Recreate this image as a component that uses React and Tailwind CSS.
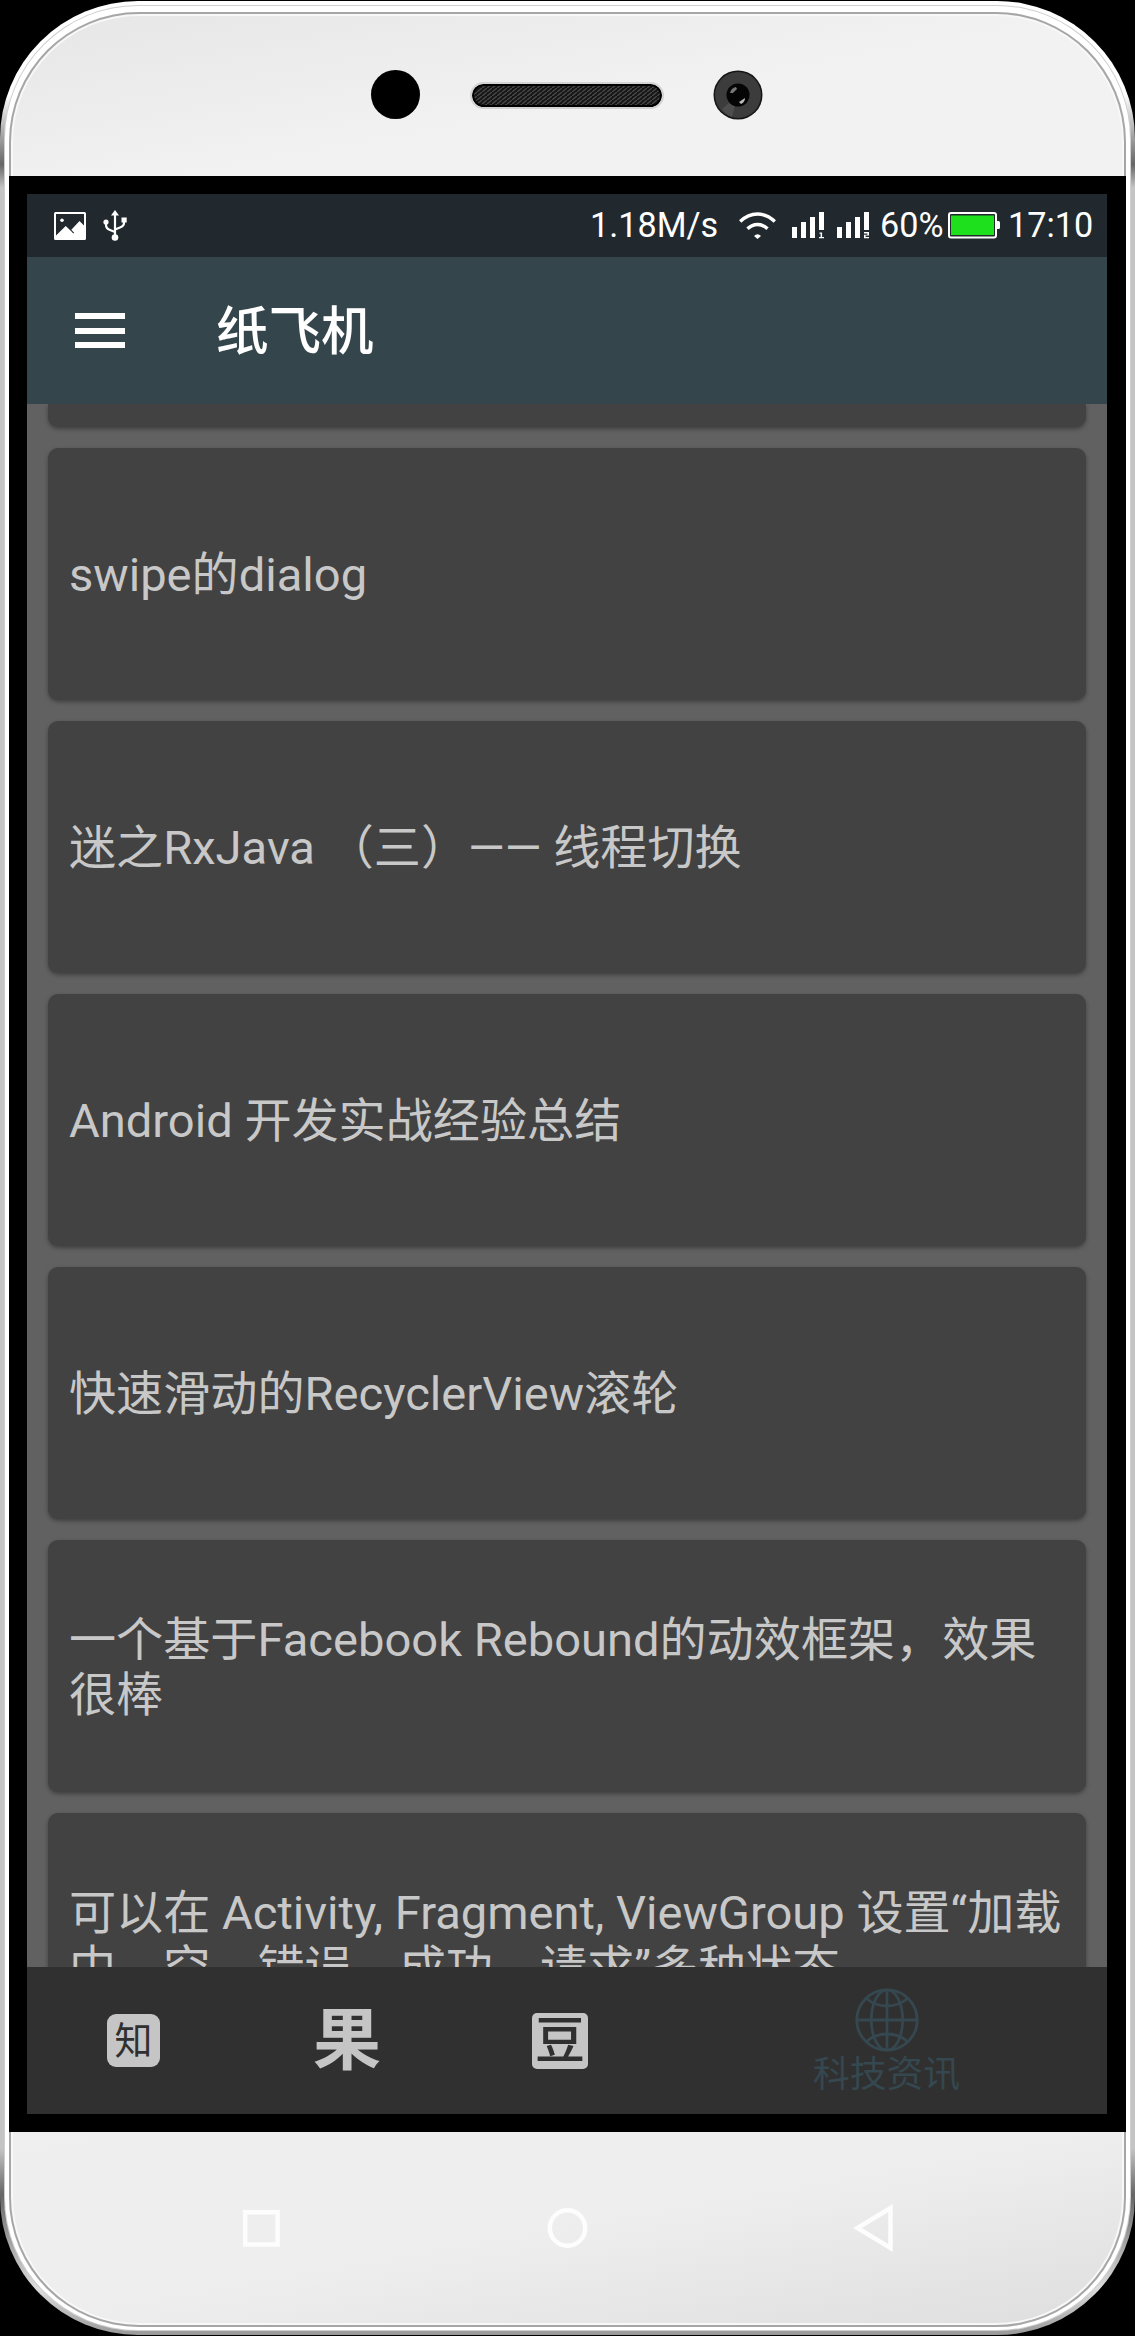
const FONT = "font-[Roboto,'Noto_Sans_CJK_SC',sans-serif]";

const articles = [
  "swipe的dialog",
  "迷之RxJava （三）—— 线程切换",
  "Android 开发实战经验总结",
  "快速滑动的RecyclerView滚轮",
  "一个基于Facebook Rebound的动效框架，效果很棒",
  "可以在 Activity, Fragment, ViewGroup 设置“加载中、空、错误、成功、请求”多种状态",
];

function Signal({ n, className }) {
  return (
    <svg className={className} width="32" height="27" viewBox="0 0 32 27" fill="#fff">
      <rect x="0" y="15" width="5" height="11" />
      <rect x="9" y="10" width="5" height="16" />
      <rect x="18" y="5" width="5" height="21" />
      <rect x="27" y="0" width="5" height="18" />
      {n === 1 ? (
        <path d="M27.5 20.5h2.6V25H32v1.3h-5V25h1.600v-3.200h-1.100z" />
      ) : (
        <path d="M27 20h5v3.600h-3.400V25H32v1.300h-5v-3.600h3.400v-1.300H27z" />
      )}
    </svg>
  );
}

function StatusBar() {
  return (
    <div className="flex h-[63px] shrink-0 items-center bg-[#21292e] text-[34.2px] leading-[63px] text-white">
      <svg className="ml-[27px]" width="32" height="28" viewBox="0 0 32 28">
        <path fill="#fff" fillRule="evenodd" d="M1.500 0h29A1.500 1.500 0 0 1 32 1.500v25a1.500 1.500 0 0 1-1.500 1.500h-29A1.500 1.500 0 0 1 0 26.500v-25A1.500 1.500 0 0 1 1.500 0zM2 2v21.500l9.700-9.500 5.300 5 2.300 2.500.8-.8-2.800-3 8.200-8.700 4.500 4.500V2z" />
        <circle cx="8" cy="8.300" r="1.800" fill="#fff" />
      </svg>
      <svg className="ml-[17px]" width="24" height="31" viewBox="0 0 24 31" fill="none" stroke="#fff" strokeWidth="2.200">
        <path d="M12 4v23M3 12v3q0 3.500 4 5l5 2M21 10v3q0 3-4 4.500l-5 2" />
        <path d="M12 0l4 5.500H8z" fill="#fff" stroke="none" />
        <circle cx="12" cy="27.500" r="3.300" fill="#fff" stroke="none" />
        <circle cx="3" cy="12" r="2.600" fill="#fff" stroke="none" />
        <path d="M18.500 7.500h5.200v5h-5.200z" fill="#fff" stroke="none" />
      </svg>
      <span className="ml-[463px] w-[127px] whitespace-nowrap">1.18M/s</span>
      <svg className="ml-[22px]" width="37" height="27" viewBox="0 0 37 27" fill="none" stroke="#fff" strokeWidth="3.400">
        <path d="M1.200 9.500Q9 2 18.500 2t17.300 7.500M8.500 16.800q4.500-4.300 10-4.300t10 4.300" />
        <path d="M15 24q3.500-3.500 7 0l-3.500 3z" fill="#fff" stroke="none" />
      </svg>
      <Signal n={1} className="ml-[16px]" />
      <Signal n={2} className="ml-[13px]" />
      <span className="ml-[11px] w-[64px] whitespace-nowrap">60%</span>
      <svg className="ml-[4px]" width="52" height="27" viewBox="0 0 52 27">
        <rect x="1" y="1" width="47" height="24.500" rx="2" fill="#21292e" stroke="#fff" strokeWidth="2" />
        <rect x="3" y="3.500" width="43" height="19.500" fill="#1ee01c" />
        <path d="M48 9h2.500q1.500 0 1.500 1.500v5q0 1.500-1.500 1.500H48z" fill="#fff" />
      </svg>
      <span className="ml-[8px] whitespace-nowrap">17:10</span>
    </div>
  );
}

function Toolbar() {
  return (
    <div className="flex h-[147px] shrink-0 items-center bg-[#34464c]">
      <div className="ml-[48px] flex h-[35px] w-[50px] flex-col justify-between">
        <div className="h-[6px] bg-white" />
        <div className="h-[6px] bg-white" />
        <div className="h-[6px] bg-white" />
      </div>
      <h1 className="ml-[91px] pt-[3px] text-[52.5px] font-medium leading-[62px] text-white">纸飞机</h1>
    </div>
  );
}

function ArticleList() {
  return (
    <div className="flex flex-1 flex-col gap-[21px] overflow-hidden bg-[#616161] px-[21px]">
      <div className="h-[23px] shrink-0 rounded-b-[10px] bg-[#424242] shadow-[0_2px_4px_rgba(0,0,0,0.35)]" />
      {articles.map((title) => (
        <div
          key={title}
          className="flex h-[252px] shrink-0 items-center rounded-[10px] bg-[#424242] px-[21px] pt-[4px] shadow-[0_2px_4px_rgba(0,0,0,0.35)]"
        >
          <p className="text-[47.12px] leading-[55.4px] text-[#c8c8c8]">{title}</p>
        </div>
      ))}
    </div>
  );
}

function BottomNav() {
  return (
    <div className="flex h-[147px] shrink-0 items-center bg-[#303030]">
      <div className="ml-[80px] flex h-[53px] w-[53px] items-center justify-center rounded-[9px] bg-[#c5c5c5] pt-[2px] text-[38px] leading-[51px] text-[#303030]">
        知
      </div>
      <div className="ml-[152px] w-[70px] text-center text-[68px] font-bold leading-[70px] text-[#c5c5c5]">果</div>
      <div className="ml-[150px] flex h-[56px] w-[56px] items-center justify-center rounded-[5px] bg-[#c5c5c5] text-[50px] font-medium leading-[56px] text-[#303030]">
        豆
      </div>
      <div className="ml-[225px] flex flex-col items-center pt-[1px] text-[#35474f]">
        <svg width="64" height="64" viewBox="0 0 64 64" fill="none" stroke="currentColor" strokeWidth="2.800">
          <circle cx="32" cy="32" r="30.200" />
          <ellipse cx="32" cy="32" rx="15.700" ry="30.200" />
          <path d="M32 2v60M2 32h60M11.500 10.500Q20 18 32 18t20.500-7.500M11.500 53.500Q20 46 32 46t20.500 7.500" />
        </svg>
        <span className="pt-[2px] text-[36.75px] leading-[41px]">科技资讯</span>
      </div>
    </div>
  );
}

function Bezel() {
  return (
    <div className="flex h-[175px] items-start">
      <div className="ml-[362px] mt-[69px] size-[49px] rounded-full bg-black" />
      <div className="ml-[50px] mt-[81px] rounded-full border-2 border-[#d4d4d4]">
        <svg className="block rounded-full" width="190" height="23" viewBox="0 0 190 23">
          <defs>
            <pattern id="mesh" width="5" height="4" patternUnits="userSpaceOnUse">
              <rect width="5" height="4" fill="#161616" />
              <path d="M0 4L5 0" stroke="#4a4a4a" strokeWidth="1.300" />
            </pattern>
          </defs>
          <rect x="1" y="1" width="188" height="21" rx="10.500" fill="url(#mesh)" stroke="#000" strokeWidth="2" />
        </svg>
      </div>
      <svg className="ml-[49px] mt-[69px]" width="50" height="50" viewBox="0 0 50 50">
        <circle cx="25" cy="25" r="24.500" fill="#161616" />
        <circle cx="25" cy="25" r="23" fill="#3c3c3c" />
        <path d="M25 25L9 39a22 22 0 0 0 10 8z" fill="#4e4e4e" />
        <circle cx="25" cy="25" r="11.500" fill="#050505" />
        <path d="M17 23q1-5 6-6l1 2-4 4z" fill="#777" />
        <path d="M26 32l6-4q0 4-4 6z" fill="#bbb" />
      </svg>
    </div>
  );
}

function NavKeys() {
  return (
    <svg className="block" width="1117" height="204" viewBox="9 2132 1117 204" fill="none" stroke="#fdfdfd" strokeWidth="4.500">
      <path d="M245.200 2212.200h32.400v32.400h-32.400z" />
      <circle cx="567.500" cy="2228" r="17.700" />
      <path d="M857.500 2228l33-20v40z" />
    </svg>
  );
}

export default function App() {
  return (
    <div className={`h-[2336px] w-[1135px] overflow-hidden bg-black pt-px ${FONT}`}>
      <div className="h-[2334px] rounded-[138px] bg-[linear-gradient(180deg,#fff_0%,#fff_4%,#666_7%,#c4c4c4_8%,#c4c4c4_92%,#666_94%,#ddd_98%,#999_100%)] p-[5px]">
        <div className="h-full rounded-[133px] bg-white px-[4px] pb-[3px] pt-[6px] shadow-[0_0_0_1px_#cfcfcf]">
          <div className="h-full overflow-hidden rounded-[130px] bg-[linear-gradient(170deg,#e6e6e6_0%,#f2f2f2_8%,#eeeeee_92%,#dedede_100%)] shadow-[inset_0_0_0_2px_#a6a6a6,inset_0_0_0_4px_#f8f8f8]">
            <div className="-mt-[12px] pt-px">
              <Bezel />
            </div>
            <div className="h-[1956px] border-y-[18px] border-l-[18px] border-r-[19px] border-black">
              <div className="flex h-full flex-col overflow-hidden">
                <StatusBar />
                <Toolbar />
                <ArticleList />
                <BottomNav />
              </div>
            </div>
            <NavKeys />
          </div>
        </div>
      </div>
    </div>
  );
}
